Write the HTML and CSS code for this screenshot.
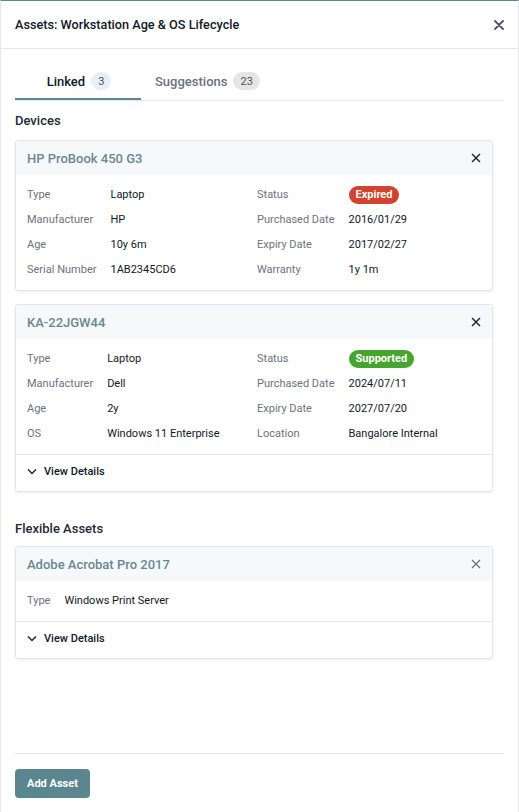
FILE: index.html
```html
<!DOCTYPE html>
<html>
<head>
<meta charset="utf-8">
<link rel="stylesheet" href="styles.css">
</head>
<body>
<div class="panel">
  <header class="panel-header">
    <h1 class="panel-title">Assets: Workstation Age &amp; OS Lifecycle</h1>
    <button class="icon-btn close-main" aria-label="Close">
      <svg width="10" height="10" viewBox="0 0 10 10"><path d="M1 1L9 9M9 1L1 9" stroke="#4b5563" stroke-width="1.8" stroke-linecap="round"/></svg>
    </button>
  </header>

  <main class="panel-body">
    <nav class="tabs">
      <div class="tab active">Linked <span class="count count-blue">3</span></div>
      <div class="tab tab-second">Suggestions <span class="count count-gray">23</span></div>
    </nav>

    <h2 class="section-title">Devices</h2>

    <section class="card">
      <div class="card-head">
        <span class="card-title">HP ProBook 450 G3</span>
        <svg class="x" width="10" height="10" viewBox="0 0 10 10"><path d="M1 1L9 9M9 1L1 9" stroke="#1f2937" stroke-width="1.5"/></svg>
      </div>
      <div class="card-fields">
        <div class="field-col">
          <span class="lbl">Type</span><span class="val">Laptop</span>
          <span class="lbl">Manufacturer</span><span class="val">HP</span>
          <span class="lbl">Age</span><span class="val">10y 6m</span>
          <span class="lbl">Serial Number</span><span class="val">1AB2345CD6</span>
        </div>
        <div class="field-col">
          <span class="lbl">Status</span><span class="val"><span class="status expired">Expired</span></span>
          <span class="lbl">Purchased Date</span><span class="val">2016/01/29</span>
          <span class="lbl">Expiry Date</span><span class="val">2017/02/27</span>
          <span class="lbl">Warranty</span><span class="val">1y 1m</span>
        </div>
      </div>
    </section>

    <section class="card">
      <div class="card-head">
        <span class="card-title">KA-22JGW44</span>
        <svg class="x" width="10" height="10" viewBox="0 0 10 10"><path d="M1 1L9 9M9 1L1 9" stroke="#1f2937" stroke-width="1.5"/></svg>
      </div>
      <div class="card-fields">
        <div class="field-col">
          <span class="lbl">Type</span><span class="val">Laptop</span>
          <span class="lbl">Manufacturer</span><span class="val">Dell</span>
          <span class="lbl">Age</span><span class="val">2y</span>
          <span class="lbl">OS</span><span class="val">Windows 11 Enterprise</span>
        </div>
        <div class="field-col">
          <span class="lbl">Status</span><span class="val"><span class="status supported">Supported</span></span>
          <span class="lbl">Purchased Date</span><span class="val">2024/07/11</span>
          <span class="lbl">Expiry Date</span><span class="val">2027/07/20</span>
          <span class="lbl">Location</span><span class="val">Bangalore Internal</span>
        </div>
      </div>
      <div class="card-foot">
        <svg width="10" height="7" viewBox="0 0 10 7"><path d="M1 1.5L5 5.5L9 1.5" fill="none" stroke="#1f2937" stroke-width="1.5"/></svg>
        <span>View Details</span>
      </div>
    </section>

    <h2 class="section-title section-gap">Flexible Assets</h2>

    <section class="card">
      <div class="card-head">
        <span class="card-title">Adobe Acrobat Pro 2017</span>
        <svg class="x" width="10" height="10" viewBox="0 0 10 10"><path d="M1 1L9 9M9 1L1 9" stroke="#6b7280" stroke-width="1.3"/></svg>
      </div>
      <div class="card-fields single">
        <div class="field-col">
          <span class="lbl">Type</span><span class="val">Windows Print Server</span>
        </div>
      </div>
      <div class="card-foot">
        <svg width="10" height="7" viewBox="0 0 10 7"><path d="M1 1.5L5 5.5L9 1.5" fill="none" stroke="#1f2937" stroke-width="1.5"/></svg>
        <span>View Details</span>
      </div>
    </section>
  </main>

  <footer class="panel-footer">
    <button class="btn-primary">Add Asset</button>
  </footer>
</div>
</body>
</html>
```

FILE: styles.css
```css
* { box-sizing: border-box; }
html, body { margin: 0; padding: 0; height: 100%; }
body {
  font-family: Roboto, "Liberation Sans", Arial, sans-serif;
  color: #1f2937;
  background: #fff;
}
.panel {
  height: 812px;
  display: flex;
  flex-direction: column;
  border-top: 1px solid #5d8790;
  border-left: 1px solid #e5e7eb;
  border-right: 1px solid #e5e7eb;
  background: #fff;
}
.panel-header {
  height: 48px;
  display: flex;
  align-items: center;
  justify-content: space-between;
  padding: 0 14px 0 14px;
  border-bottom: 1px solid #e5e7eb;
}
.panel-title {
  margin: 0;
  font-size: 12.7px;
  font-weight: 500;
  color: #111827;
}
.icon-btn {
  background: none;
  border: 0;
  padding: 0;
  display: flex;
  cursor: pointer;
}
.panel-body {
  flex: 1;
  padding: 0 14px;
}
.tabs {
  display: flex;
  margin-top: 21px;
  border-bottom: 1px solid #e5e7eb;
}
.tab {
  width: 126px;
  height: 30px;
  display: flex;
  align-items: flex-start;
  justify-content: center;
  gap: 6px;
  font-size: 13px;
  font-weight: 500;
  color: #6b7280;
  padding-top: 4px;
  padding-left: 2px;
}
.tab-second {
  width: auto;
  padding-left: 14px;
}
.tab.active {
  color: #111827;
  border-bottom: 2px solid #5d8790;
  margin-bottom: -1px;
}
.count {
  display: inline-flex;
  align-items: center;
  justify-content: center;
  height: 18px;
  min-width: 20px;
  padding: 0 7px;
  border-radius: 9px;
  font-size: 11px;
  font-weight: 400;
  color: #4b5563;
  margin-top: -2px;
}
.count-blue { background: #e7effb; }
.count-gray { background: #e5e5e5; }
.section-title {
  margin: 12px 0 12px;
  font-size: 13px;
  font-weight: 500;
  color: #1f2937;
}
.section-gap { margin-top: 29px; margin-bottom: 10px; }
.card {
  border: 1px solid #e3e5e8;
  border-radius: 3px;
  box-shadow: 0 1px 3px rgba(0,0,0,0.08);
  margin-bottom: 13px;
  width: 478px;
  overflow: hidden;
}
.card-head {
  height: 34px;
  background: #f7f8f9;
  display: flex;
  align-items: center;
  justify-content: space-between;
  padding: 0 11px 0 11px;
}
.card-title {
  font-size: 13px;
  font-weight: 500;
  color: #678894;
}
.card-fields {
  display: grid;
  grid-template-columns: 1fr 1fr;
  column-gap: 6px;
  padding: 7px 11px 8px;
}
.card-fields.single { grid-template-columns: 1fr; }
.field-col {
  display: grid;
  grid-template-columns: auto 1fr;
  column-gap: 14px;
  grid-auto-rows: 25px;
  align-items: center;
  justify-content: start;
}
.lbl { font-size: 11px; color: #6b7280; }
.val { font-size: 11px; color: #111827; }
.status {
  display: inline-flex;
  align-items: center;
  height: 18px;
  padding: 0 7px;
  border-radius: 9px;
  color: #fff;
  font-weight: 700;
  font-size: 11px;
}
.status.expired { background: #d1432e; }
.status.supported { background: #46a52f; }
.card-foot {
  border-top: 1px solid #e5e7eb;
  height: 37px;
  display: flex;
  align-items: center;
  gap: 7px;
  padding: 0 11px 4px;
  font-size: 11px;
  font-weight: 500;
  color: #111827;
}
.panel-footer {
  margin: 0 14px;
  border-top: 1px solid #e5e7eb;
  padding: 15px 0 14px;
}
.btn-primary {
  background: #5b8690;
  color: #fff;
  border: 0;
  border-radius: 4px;
  height: 29px;
  padding: 0 12px;
  font-family: inherit;
  font-size: 11px;
  font-weight: 700;
}
```
